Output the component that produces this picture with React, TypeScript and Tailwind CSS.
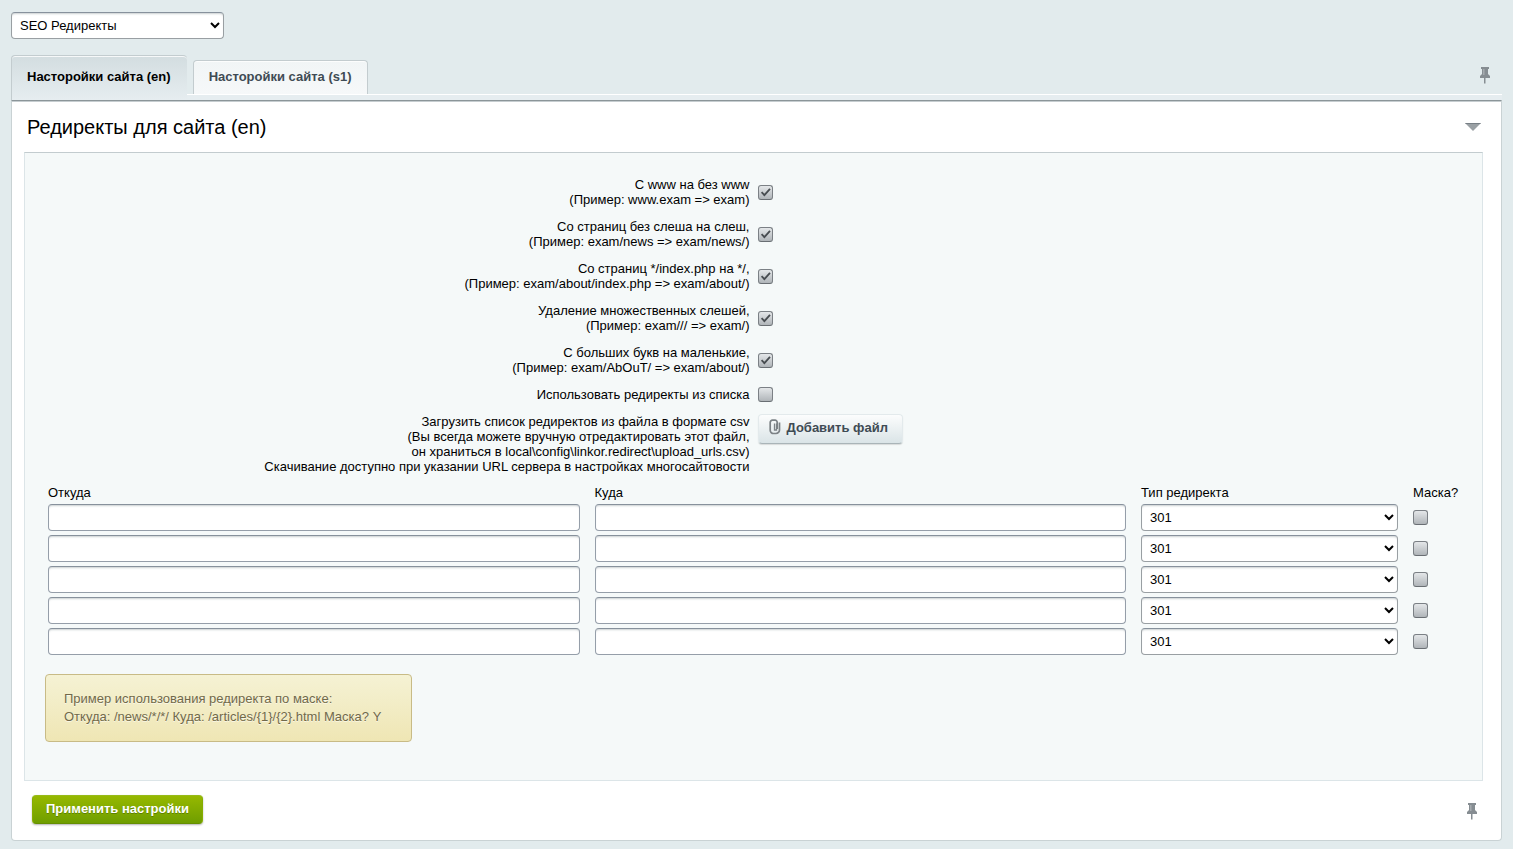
import React, { useState } from 'react';
import clsx from 'clsx';

const TABS = [
  { id: 'en', title: 'Насторойки сайта (en)' },
  { id: 's1', title: 'Насторойки сайта (s1)' },
];

const OPTIONS = [
  { id: 'www', lines: ['С www на без www', '(Пример: www.exam => exam)'], checked: true },
  { id: 'slash', lines: ['Со страниц без слеша на слеш,', '(Пример: exam/news => exam/news/)'], checked: true },
  { id: 'index', lines: ['Со страниц */index.php на */,', '(Пример: exam/about/index.php => exam/about/)'], checked: true },
  { id: 'multislash', lines: ['Удаление множественных слешей,', '(Пример: exam/// => exam/)'], checked: true },
  { id: 'lowercase', lines: ['С больших букв на маленькие,', '(Пример: exam/AbOuT/ => exam/about/)'], checked: true },
  { id: 'list', lines: ['Использовать редиректы из списка'], checked: false },
];

const FILE_LINES = [
  'Загрузить список редиректов из файла в формате csv',
  '(Вы всегда можете вручную отредактировать этот файл,',
  'он храниться в local\\config\\linkor.redirect\\upload_urls.csv)',
  'Скачивание доступно при указании URL сервера в настройках многосайтовости',
];

const ROWS = [1, 2, 3, 4, 5];

const fieldClass =
  'h-[27px] w-full rounded border border-[#959ea9] border-t-[#87919c] bg-white text-[13px] text-black shadow-[inset_0_2px_2px_-1px_rgba(180,188,191,0.7)] outline-none';

const selectClass =
  'h-[27px] rounded border border-[#999fa3] border-t-[#87919c] bg-white px-1 text-[13px] text-black shadow-[inset_0_2px_2px_-1px_rgba(180,188,191,0.7)] outline-none';

// Square grey checkbox with a drawn tick
function Checkbox(props: React.InputHTMLAttributes<HTMLInputElement>) {
  return (
    <span className="relative block size-[15px]">
      <input
        type="checkbox"
        className="peer block size-[15px] appearance-none rounded-[3px] border border-[#7b8085] border-b-[#696e73] bg-linear-to-b from-[#e4e7e9] to-[#b0b5b9]"
        {...props}
      />
      <svg
        viewBox="0 0 15 15"
        className="pointer-events-none absolute inset-0 hidden size-[15px] peer-checked:block"
        fill="none"
        stroke="#474c50"
        strokeWidth="1.8"
      >
        <path d="M3.6 7.2 6.4 10.1 12 3.8" />
      </svg>
    </span>
  );
}

function PinIcon() {
  return (
    <svg width="10" height="17" viewBox="0 0 10 17" fill="#868d92">
      <path d="M1 0h8v2H8v5l2 2v2H0V9l2-2V2H1z" />
      <path d="M4 11h1.500v5.500H4z" />
      <path d="M3 2h1.500v6H3z" fill="#a5abaf" />
    </svg>
  );
}

function ClipIcon() {
  return (
    <svg width="12" height="16" viewBox="0 0 12 16" fill="none" stroke="#7c8286" strokeWidth="2">
      <path d="M10.500 3.500V11a3.500 3.500 0 0 1-3.500 3.500H4.500A3.300 3.300 0 0 1 1.200 11.200V3.400A2.200 2.200 0 0 1 3.400 1.200H6A2.200 2.200 0 0 1 8.200 3.400V10" strokeWidth="1.700" />
      <path d="M5.500 4.500v6.500h2V4.500" strokeWidth="1.300" />
    </svg>
  );
}

export default function App() {
  const [activeTab, setActiveTab] = useState('en');
  const [collapsed, setCollapsed] = useState(false);

  return (
    <div className="min-h-screen bg-[#e2ebed] px-[11px] pt-3 pb-2 font-['Liberation_Sans',Arial,sans-serif] text-[13px] leading-[15px] text-black">
      <select aria-label="Модуль" className={clsx(selectClass, 'block w-[213px]')}>
        <option>SEO Редиректы</option>
      </select>

      {/* Tabs */}
      <div className="mt-4 flex items-end justify-between">
        <div role="tablist" className="flex items-end gap-1.5">
          {TABS.map((tab) => (
            <button
              key={tab.id}
              type="button"
              role="tab"
              aria-selected={activeTab === tab.id}
              onClick={() => setActiveTab(tab.id)}
              className={clsx(
                'rounded-t border border-b-0 border-[#c3cccf] px-[15px] font-bold shadow-[inset_0_1px_0_rgba(255,255,255,0.8)]',
                activeTab === tab.id
                  ? 'relative -mb-1.5 h-[45px] border-r-0 bg-linear-to-b from-[#d3dde0] to-[#e6edf0] pr-4 pb-1 text-black'
                  : 'h-[34px] bg-linear-to-b from-[#f1f5f6] to-[#f6f8f9] pb-0.5 text-[#3f4b54]'
              )}
            >
              {tab.title}
            </button>
          ))}
        </div>
        <button type="button" aria-label="Закрепить вкладки" className="mr-3 mb-2.5">
          <PinIcon />
        </button>
      </div>
      <div className="h-1.5 border-t border-l border-t-white border-l-[#c3cccf] bg-[#e6edf0]" />

      {/* Panel */}
      <div className="rounded-b-sm border border-[#c9d2d4] border-t-[#8b9599] bg-white pb-4 shadow-[inset_0_1px_0_#c6cdd0]">
        <div className="flex h-[51px] items-center justify-between pr-5 pl-[15px]">
          <h1 className="text-xl leading-6">Редиректы для сайта (en)</h1>
          <button type="button" aria-label="Свернуть" onClick={() => setCollapsed(!collapsed)}>
            <svg width="16" height="8" viewBox="0 0 16 8">
              <path d="M0 0h16L8 8z" fill="#9aa0a4" />
              <path d="M0 0h16l-1 1H1z" fill="#777f85" />
            </svg>
          </button>
        </div>

        {!collapsed && (
          <div className="mr-[18px] ml-3 border border-[#dce5e8] border-t-[#c3cccf] bg-[#f5f9f9] px-5 pt-[18px] pb-[38px]">
            {OPTIONS.map((option) => (
              <div key={option.id} className="grid grid-cols-2 items-center gap-2 py-1.5">
                <label htmlFor={option.id} className="text-right">
                  {option.lines.map((line) => (
                    <span key={line} className="block">{line}</span>
                  ))}
                </label>
                <Checkbox id={option.id} defaultChecked={option.checked} />
              </div>
            ))}

            <div className="grid grid-cols-2 items-start gap-2 py-1.5">
              <label htmlFor="file" className="text-right">
                {FILE_LINES.map((line) => (
                  <span key={line} className="block">{line}</span>
                ))}
              </label>
              <div>
                <button
                  id="file"
                  type="button"
                  className="flex h-[30px] items-center gap-1.5 rounded border border-[#e3eaec] border-b-[#a9b4b8] bg-linear-to-b from-[#fcfdfd] to-[#dae4e7] pr-3.5 pb-1 pl-2.5 font-bold text-[#3f4b54] shadow-[0_1px_1px_rgba(0,0,0,0.12)]"
                >
                  <ClipIcon />
                  Добавить файл
                </button>
              </div>
            </div>

            <table className="ml-[3px] w-[calc(100%-3px)] table-fixed border-collapse text-left">
              <colgroup>
                <col />
                <col />
                <col className="w-[272px]" />
                <col className="w-[49px]" />
              </colgroup>
              <thead>
                <tr>
                  <th className="h-6 font-normal">Откуда</th>
                  <th className="h-6 font-normal">Куда</th>
                  <th className="h-6 font-normal">Тип редиректа</th>
                  <th className="h-6 font-normal">Маска?</th>
                </tr>
              </thead>
              <tbody>
                {ROWS.map((row) => (
                  <tr key={row}>
                    <td className="pr-[15px] pb-1">
                      <input type="text" aria-label={`Откуда ${row}`} className={clsx(fieldClass, 'block px-2')} />
                    </td>
                    <td className="pr-[15px] pb-1">
                      <input type="text" aria-label={`Куда ${row}`} className={clsx(fieldClass, 'block px-2')} />
                    </td>
                    <td className="pr-[15px] pb-1">
                      <select aria-label={`Тип редиректа ${row}`} className={clsx(selectClass, 'block w-full')}>
                        <option>301</option>
                        <option>302</option>
                      </select>
                    </td>
                    <td className="pb-1">
                      <Checkbox aria-label={`Маска ${row}`} />
                    </td>
                  </tr>
                ))}
              </tbody>
            </table>

            <div className="mt-[15px] w-fit rounded border border-[#c8bb86] bg-linear-to-b from-[#f5f2d4] to-[#efe6b4] py-[15px] pr-[30px] pl-[18px] leading-[18px] text-[#716949] [text-shadow:0_1px_0_rgba(255,255,255,0.6)]">
              <p>Пример использования редиректа по маске:</p>
              <p>Откуда: /news/*/*/ Куда: /articles/{'{1}'}/{'{2}'}.html Маска? Y</p>
            </div>
          </div>
        )}

        <div className="mt-3.5 flex items-end justify-between pr-6 pl-5">
          <button
            type="button"
            className="h-[29px] rounded border border-[#86ad00] border-t-[#97ba18] border-b-[#658f00] bg-linear-to-b from-[#96b800] to-[#6f9e00] px-[13px] pb-0.5 font-bold text-white shadow-[0_1px_2px_rgba(0,0,0,0.3)] [text-shadow:0_1px_0_rgba(60,90,0,0.5)]"
          >
            Применить настройки
          </button>
          <button type="button" aria-label="Закрепить панель" className="mb-1">
            <PinIcon />
          </button>
        </div>
      </div>
    </div>
  );
}
